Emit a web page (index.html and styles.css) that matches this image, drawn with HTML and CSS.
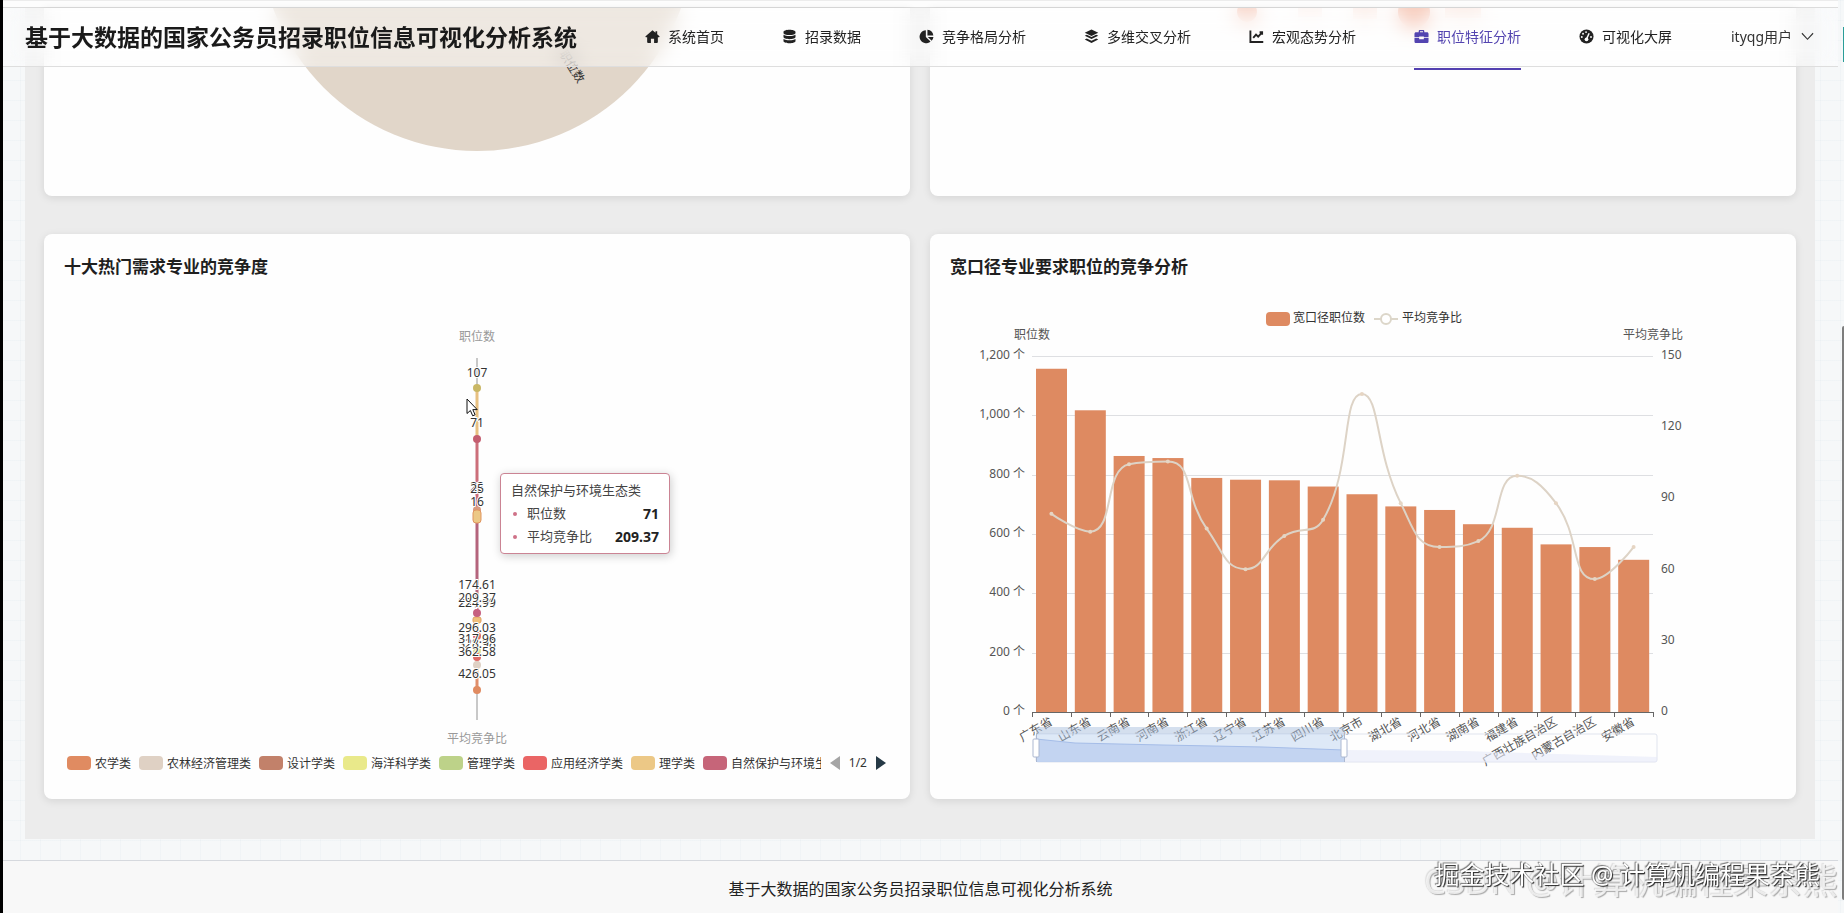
FILE: index.html
```html
<!DOCTYPE html>
<html lang="zh-CN">
<head>
<meta charset="utf-8">
<title>基于大数据的国家公务员招录职位信息可视化分析系统</title>
<link rel="stylesheet" href="styles.css">
</head>
<body>
<div class="topstrip"></div>
<header class="header">
  <h1 class="brand">基于大数据的国家公务员招录职位信息可视化分析系统</h1>
  <nav class="nav">
    <a class="nav-item" href="#home"><svg class="icon" viewBox="0 0 16 16"><path d="M8 1.2 .6 7.8c-.3.3-.1.9.4.9h1.3v5.2c0 .6.4 1 1 1h3V10.500h3.400v4.400h3c.6 0 1-.4 1-1V8.700H15c.5 0 .7-.6.4-.9L13 5.600V2.400h-1.800V4z"/></svg>系统首页</a>
    <a class="nav-item" href="#data"><svg class="icon" viewBox="0 0 16 16"><path d="M8 .8C4.400.800 1.600 1.800 1.600 3.200v1C1.600 5.500 4.400 6.400 8 6.400s6.400-.9 6.400-2.200v-1C14.400 1.800 11.600.8 8 .8zM1.600 6.200v2.400c0 1.300 2.800 2.200 6.400 2.200s6.400-.9 6.400-2.200V6.200C13 7.200 10.600 7.500 8 7.500s-5-.3-6.400-1.300zM1.600 10.600v2.200C1.600 14.200 4.400 15.200 8 15.200s6.400-1 6.400-2.400v-2.200c-1.400 1-3.800 1.300-6.400 1.300s-5-.3-6.400-1.300z"/></svg>招录数据</a>
    <a class="nav-item" href="#competition"><svg class="icon" viewBox="0 0 16 16"><path d="M7.300 1.200v7.200l5 5A7 7 0 1 1 7.300 1.200zM9 .7A7 7 0 0 1 15.300 7H9zM9.400 8.500h6a7 7 0 0 1-1.900 4.100z"/></svg>竞争格局分析</a>
    <a class="nav-item" href="#cross"><svg class="icon" viewBox="0 0 16 16"><path d="M8 .6.800 4 8 7.500 15.200 4z"/><path d="M.8 7.200 3 6.200l5 2.400 5-2.400 2.200 1L8 10.700zM.8 11.200l2.200-1 5 2.400 5-2.400 2.200 1L8 14.900z"/></svg>多维交叉分析</a>
    <a class="nav-item" href="#macro"><svg class="icon icon-line" viewBox="0 0 16 16"><path d="M1.500 1.500v12.300h13.700M4.500 9.500l3-3.500 2.300 2.200 4.200-4.500M11.300 3.500H14v2.700"/></svg>宏观态势分析</a>
    <a class="nav-item active" href="#feature" aria-current="page"><svg class="icon" viewBox="0 0 16 16"><path d="M5 3.500V2.300C5 1.500 5.500 1 6.300 1h3.400c.8 0 1.300.5 1.300 1.300v1.200h2.800c1 0 1.700.7 1.700 1.700v3.500h-5V8h-5v.7h-5V5.200c0-1 .7-1.700 1.700-1.700zm1.400 0h3.200v-1H6.400zM.5 9.700h5v1.100h5V9.700h5v3.500c0 1-.7 1.700-1.700 1.700H2.200c-1 0-1.700-.7-1.700-1.700z"/></svg>职位特征分析</a>
    <a class="nav-item" href="#screen"><svg class="icon" viewBox="0 0 16 16"><circle cx="8" cy="8" r="7.500"/><path class="gauge" d="M8 10.800 10.800 4.500"/><circle class="dot" cx="8" cy="11" r="2"/><circle class="dot" cx="7.500" cy="3.300" r="1"/><circle class="dot" cx="4.300" cy="5" r="1"/><circle class="dot" cx="3" cy="8.500" r="1"/><circle class="dot" cx="12.800" cy="8.500" r="1"/></svg>可视化大屏</a>
  </nav>
  <button class="user" type="button">ityqg用户<svg class="chevron" viewBox="0 0 14 9"><path d="M1 1l6 6.500L13 1"/></svg></button>
</header>

<main class="main">
  <div class="panel">
    <section class="card card-cut">
      <svg class="chart-cut" viewBox="0 0 800 188" aria-hidden="true">
        <circle cx="400" cy="-74" r="217" fill="#e1d6c9"/>
        <text class="pie-label" transform="translate(501 76) rotate(58)" text-anchor="end">职位数</text>
      </svg>
    </section>
    <section class="card card-cut">
      <svg class="chart-cut" viewBox="0 0 800 188" aria-hidden="true">
        <g fill="#ec8f6c">
          <circle cx="284" cy="4" r="10" opacity=".7"/>
          <rect x="335" y="0" width="24" height="9" opacity=".15"/>
          <rect x="390" y="0" width="24" height="11" opacity=".25"/>
          <circle cx="451" cy="4" r="16" opacity=".8"/>
          <rect x="482" y="0" width="36" height="10" opacity=".25"/>
        </g>
      </svg>
    </section>

    <section class="card">
      <h2 class="card-title">十大热门需求专业的竞争度</h2>
      <div class="parallel">
        <svg id="parallel-chart" class="parallel-chart" viewBox="0 0 800 458"></svg>
        <div class="tooltip">
          <div>自然保护与环境生态类</div>
          <div class="tip-row"><i class="tip-dot"></i><span>职位数</span><b>71</b></div>
          <div class="tip-row"><i class="tip-dot"></i><span>平均竞争比</span><b>209.37</b></div>
        </div>
        <svg class="cursor" viewBox="0 0 12 19"><path d="M1 1v14.500l3.400-3 2.300 5.300 2.400-1-2.300-5.200h4.400z"/></svg>
      </div>
      <div class="legend">
        <div class="legend-items">
          <button class="legend-item" type="button"><i class="swatch c1"></i>农学类</button>
          <button class="legend-item" type="button"><i class="swatch c2"></i>农林经济管理类</button>
          <button class="legend-item" type="button"><i class="swatch c3"></i>设计学类</button>
          <button class="legend-item" type="button"><i class="swatch c4"></i>海洋科学类</button>
          <button class="legend-item" type="button"><i class="swatch c5"></i>管理学类</button>
          <button class="legend-item" type="button"><i class="swatch c6"></i>应用经济学类</button>
          <button class="legend-item" type="button"><i class="swatch c7"></i>理学类</button>
          <button class="legend-item" type="button"><i class="swatch c8"></i>自然保护与环境生态类</button>
        </div>
        <div class="pager">
          <button class="page-btn" type="button" aria-label="上一页" disabled><svg viewBox="0 0 10 14"><path d="M10 0v14L0 7z" fill="#a5a5a5"/></svg></button>
          <span>1/2</span>
          <button class="page-btn" type="button" aria-label="下一页"><svg viewBox="0 0 10 14"><path d="M0 0v14l10-7z" fill="#263a46"/></svg></button>
        </div>
      </div>
    </section>

    <section class="card">
      <h2 class="card-title">宽口径专业要求职位的竞争分析</h2>
      <svg id="combo-chart" class="combo-chart" viewBox="0 0 800 489"></svg>
    </section>
  </div>
</main>

<footer class="footer">基于大数据的国家公务员招录职位信息可视化分析系统</footer>

<div class="mark mark-back">CSDN @计算机编程果茶熊</div>
<div class="mark mark-front">掘金技术社区 @ 计算机编程果茶熊</div>
<div class="edge-tab"></div>
<div class="scroll-thumb"></div>
<script src="charts.js"></script>
</body>
</html>
```
FILE: styles.css
```css
* { box-sizing: border-box; }

body {
  margin: 0;
  min-height: 100vh;
  display: flex;
  flex-direction: column;
  border-left: 3px solid #000;
  padding-right: 6px;
  overflow: hidden;
  font-family: "Noto Sans", "Noto Sans CJK SC", sans-serif;
  color: #222;
  background-color: #f6f8f9;
  background-image:
    linear-gradient(90deg, rgba(120, 160, 190, .04) 1px, transparent 1px),
    linear-gradient(rgba(120, 160, 190, .04) 1px, transparent 1px);
  background-size: 20px 20px;
}

button {
  border: 0;
  padding: 0;
  background: none;
  font: inherit;
  color: inherit;
}

.topstrip {
  height: 8px;
  background: #fdfdfd;
  border-top: 1px solid #ececec;
  border-bottom: 1px solid #dcdcdc;
}

.header {
  position: fixed;
  z-index: 10;
  top: 8px;
  left: 3px;
  right: 6px;
  height: 59px;
  display: flex;
  align-items: center;
  padding: 0 24px 2px 22px;
  background: rgba(255, 255, 255, .45);
  border-bottom: 1px solid #dedede;
}

.header::before {
  content: "";
  position: absolute;
  z-index: -1;
  inset: 0;
  backdrop-filter: blur(10px);
}

.brand {
  margin: 0;
  font-size: 23px;
  font-weight: 700;
  line-height: 32px;
  color: #1a1a1a;
  white-space: nowrap;
  font-family: KaiTi, STKaiti, "Noto Sans CJK SC", sans-serif;
}

.nav {
  display: flex;
  gap: 58px;
  margin-left: 68px;
  height: 58px;
}

.nav-item {
  position: relative;
  display: flex;
  align-items: center;
  gap: 8px;
  font-size: 14px;
  color: #222;
  text-decoration: none;
  white-space: nowrap;
}

.nav-item.active { color: #5344b0; }

.nav-item.active::after {
  content: "";
  position: absolute;
  left: 0;
  right: 0;
  bottom: -5px;
  height: 2px;
  background: #5340b0;
}

.icon { width: 15px; height: 15px; fill: currentColor; }
.icon-line { fill: none; stroke: currentColor; stroke-width: 2; }
.icon .dot { fill: #fff; }
.icon .gauge { stroke: #fff; stroke-width: 1.500; }

.user {
  display: flex;
  align-items: center;
  gap: 9px;
  margin-left: auto;
  font-size: 14px;
  color: #333;
  white-space: nowrap;
}

.chevron { width: 13px; height: 9px; fill: none; stroke: #333; stroke-width: 1.200; }

.main { padding: 0 23px 0 22px; }

.panel {
  display: grid;
  grid-template-columns: 1fr 1fr;
  gap: 38px 20px;
  padding: 0 19px 40px;
  background: #ececec;
}

.card {
  min-width: 0;
  padding: 20px;
  background: #fefefe;
  border-radius: 8px;
  box-shadow: 0 2px 8px rgba(0, 0, 0, .1);
}

.card-cut { padding: 0; border-radius: 0 0 8px 8px; }
.chart-cut { display: block; width: 100%; height: 188px; }

.pie-label { font-size: 12px; fill: #333; }

.card-title {
  margin: 0 0 10px;
  font-size: 17px;
  line-height: 26px;
  font-weight: 700;
  color: #1f1f1f;
}

.parallel { position: relative; }
.parallel-chart { display: block; width: 100%; height: 458px; }
.combo-chart { display: block; width: 100%; height: 489px; }

.parallel-chart text, .combo-chart text { font-size: 12px; fill: #555; }
.parallel-chart .axis-name { fill: #999; }
.parallel-chart .value { fill: #333; stroke: #fff; stroke-width: 2; paint-order: stroke; }
.combo-chart .legend-text { fill: #333; }

.tooltip {
  position: absolute;
  top: 183px;
  left: calc(50% + 23px);
  width: 170px;
  padding: 5px 10px;
  border: 1px solid #cb8494;
  border-radius: 4px;
  background: #fff;
  box-shadow: 1px 2px 10px rgba(0, 0, 0, .2);
  font-size: 13px;
  line-height: 23px;
  color: #444;
}

.tip-row { display: flex; align-items: center; }
.tip-row b { margin-left: auto; font-size: 14px; color: #222; }
.tip-dot { width: 4px; height: 4px; margin: 0 10px 0 2px; border-radius: 50%; background: #cf7288; }

.cursor {
  position: absolute;
  top: 108px;
  left: calc(50% - 11px);
  width: 12px;
  height: 19px;
  fill: #fff;
  stroke: #111;
}

.legend {
  display: flex;
  align-items: center;
  justify-content: space-between;
  height: 29px;
  padding: 0 4px 0 3px;
  font-size: 12px;
  color: #333;
}

.legend-items { flex: 1; display: flex; gap: 8px; overflow: hidden; }
.legend-item { display: flex; align-items: center; gap: 4px; white-space: nowrap; }
.swatch { width: 24px; height: 14px; border-radius: 4px; }
.c1 { background: #e08b61; }
.c2 { background: #dfd1c4; }
.c3 { background: #c2816a; }
.c4 { background: #e9e98a; }
.c5 { background: #bdd289; }
.c6 { background: #ea6565; }
.c7 { background: #ecc886; }
.c8 { background: #c66579; }

.pager { display: flex; align-items: center; gap: 9px; margin-left: 9px; }
.page-btn { display: flex; }
.page-btn svg { width: 10px; height: 14px; }

.footer {
  flex: 1;
  margin-top: 21px;
  padding: 15px 0 13px;
  border-top: 1px solid #d6d9de;
  background: #f8f8f8;
  text-align: center;
  font-size: 16px;
  line-height: 24px;
  color: #222;
  font-family: STSong, SimSun, "Noto Sans CJK SC", sans-serif;
}

.mark { position: fixed; white-space: nowrap; }

.mark-front {
  right: 24px;
  bottom: 21px;
  font-size: 25px;
  line-height: 36px;
  color: #fff;
  text-shadow: 1px 1px 1px #222, -1px -1px 1px #777;
}

.mark-back {
  right: 6px;
  bottom: 8px;
  font-size: 35px;
  line-height: 48px;
  color: rgba(250, 250, 250, .8);
  text-shadow: 1px 1px 1px #aaa, -1px -1px 1px #ddd;
}

.edge-tab {
  position: fixed;
  right: 0;
  top: 27px;
  width: 1px;
  height: 35px;
  background: #2a9d98;
}

.scroll-thumb {
  position: fixed;
  right: 0;
  top: 326px;
  width: 2px;
  height: 574px;
  border-radius: 2px 0 0 2px;
  background: #7d7d7d;
}
```
FILE: charts.js
```js
const NS = "http://www.w3.org/2000/svg";

function add(parent, tag, attrs, text) {
  const el = document.createElementNS(NS, tag);
  for (const key in attrs) el.setAttribute(key, attrs[key]);
  if (text !== undefined) el.textContent = text;
  parent.appendChild(el);
  return el;
}

function smoothPath(points, smooth) {
  const clamp = (v, a, b) => Math.max(Math.min(v, Math.max(a, b)), Math.min(a, b));
  let d = `M${points[0]}`;
  let out = points[0];
  for (let i = 1; i < points.length; i++) {
    const p = points[i], prev = points[i - 1], next = points[i + 1];
    if (!next) {
      d += `C${out} ${p} ${p}`;
      break;
    }
    const lenPrev = Math.hypot(p[0] - prev[0], p[1] - prev[1]);
    const lenNext = Math.hypot(next[0] - p[0], next[1] - p[1]);
    const ratio = lenNext / (lenNext + lenPrev);
    const cpIn = [], cpOut = [];
    for (let k = 0; k < 2; k++) {
      const v = next[k] - prev[k];
      let o = clamp(p[k] + v * smooth * ratio, next[k], p[k]);
      let n = clamp(p[k] - (o - p[k]) * lenPrev / lenNext, prev[k], p[k]);
      o = p[k] + (p[k] - n) * lenNext / lenPrev;
      cpIn.push(n);
      cpOut.push(o);
    }
    d += `C${out} ${cpIn} ${p}`;
    out = cpOut;
  }
  return d;
}

function drawCombo() {
  const svg = document.getElementById("combo-chart");
  const left = 69, right = 690, top = 66, bottom = 422;
  const names = ["广东省", "山东省", "云南省", "河南省", "浙江省", "辽宁省", "江苏省", "四川省",
    "北京市", "湖北省", "河北省", "湖南省", "福建省", "广西壮族自治区", "内蒙古自治区", "安徽省"];
  const jobs = [1157, 1017, 863, 856, 789, 783, 781, 760, 734, 693, 681, 633, 621, 565, 556, 513];
  const ratios = [83.5, 76, 104.4, 105.5, 77.3, 60.2, 74.2, 81, 134, 88, 69.500, 72, 99.500, 88, 56, 69.500];
  const band = (right - left) / names.length;
  const yJobs = v => bottom - v / 1200 * (bottom - top);
  const yRatio = v => bottom - v / 150 * (bottom - top);

  add(svg, "rect", { x: 303, y: 22, width: 24, height: 14, rx: 4, fill: "#de8a61" });
  add(svg, "text", { x: 330, y: 32, class: "legend-text" }, "宽口径职位数");
  add(svg, "path", { d: "M411 29H435", stroke: "#dcd6c9", "stroke-width": 2 });
  add(svg, "circle", { cx: 423, cy: 29, r: 5, fill: "#fff", stroke: "#dcd6c9", "stroke-width": 2 });
  add(svg, "text", { x: 439, y: 32, class: "legend-text" }, "平均竞争比");
  add(svg, "text", { x: left, y: 49, "text-anchor": "middle" }, "职位数");
  add(svg, "text", { x: right, y: 49, "text-anchor": "middle" }, "平均竞争比");

  for (let v = 0; v <= 1200; v += 200) {
    const y = Math.round(yJobs(v)) + 0.5;
    if (v) add(svg, "path", { d: `M${left} ${y}H${right}`, stroke: "#dedfe2" });
    add(svg, "text", { x: 62, y: y + 2, "text-anchor": "end" }, v.toLocaleString("en-US") + " 个");
  }
  for (let v = 0; v <= 150; v += 30) {
    add(svg, "text", { x: right + 8, y: Math.round(yRatio(v)) + 3 }, v);
  }

  jobs.forEach((v, i) => {
    add(svg, "rect", { x: left + band * i + 4, y: yJobs(v), width: 31, height: bottom - yJobs(v), fill: "#de8a61" });
  });

  let axis = `M${left} 422.500H${right}`;
  for (let i = 0; i <= names.length; i++) axis += `M${Math.round(left + band * i) + 0.5} 422v5`;
  add(svg, "path", { d: axis, stroke: "#666", fill: "none" });

  const points = ratios.map((v, i) => [left + band * (i + 0.5), yRatio(v)]);
  add(svg, "path", { d: smoothPath(points, 0.5), fill: "none", stroke: "#ddd3c6", "stroke-width": 2 });
  points.forEach(p => add(svg, "circle", { cx: p[0], cy: p[1], r: 2, fill: "#e6d5c3" }));

  names.forEach((name, i) => {
    const x = left + band * (i + 0.5);
    add(svg, "text", { transform: `translate(${x + 2} 434) rotate(-30)`, "text-anchor": "end" }, name);
  });

  add(svg, "rect", { x: 73, y: 444, width: 621, height: 28, rx: 2, fill: "none", stroke: "#e0e4ee" });
  add(svg, "path", { d: "M381 460L500 461L694 467V472H381Z", fill: "#e6eaf8", opacity: 0.6 });
  add(svg, "rect", { x: 73, y: 437, width: 308, height: 7, fill: "#a9c0de", opacity: 0.5 });
  add(svg, "rect", { x: 73, y: 444, width: 308, height: 28, fill: "#b8d0f0", opacity: 0.45 });
  add(svg, "path", { d: "M73 449L112 453L200 455L300 457L381 460V472H73Z", fill: "#b4c9ee", opacity: 0.65 });
  add(svg, "path", { d: "M73 449L112 453L200 455L300 457L381 460", fill: "none", stroke: "#a5bde8" });
  [73, 381].forEach(x => {
    add(svg, "path", { d: `M${x}.500 444V472`, stroke: "#acb8d1" });
    add(svg, "rect", { x: x - 3, y: 449, width: 6, height: 18, rx: 1, fill: "#fff", stroke: "#acb8d1" });
  });
}

function drawParallel() {
  const svg = document.getElementById("parallel-chart");
  const x = 400;
  add(svg, "text", { x, y: 51, "text-anchor": "middle", class: "axis-name" }, "职位数");
  add(svg, "text", { x, y: 453, "text-anchor": "middle", class: "axis-name" }, "平均竞争比");
  add(svg, "path", { d: `M${x} 68V430`, stroke: "#c8c8c8", "stroke-width": 2 });
  [[98, 148, "#e8c080"], [148, 218, "#cc6f7a"], [218, 323, "#b4647c"], [323, 365, "#ecb98a"],
    [365, 376, "#e2a0a0"], [376, 400, "#e08f6c"]].forEach(s => {
    add(svg, "path", { d: `M${x} ${s[0]}V${s[1]}`, stroke: s[2], "stroke-width": 3 });
  });
  [[98, "#c9b765"], [149, "#c45e70"], [220, "#d99a80"], [346, "#e06b66"],
    [361, "#dce29a"], [367, "#e06b66"], [375, "#dfd1c4"], [400, "#e08b61"]].forEach(p => {
    add(svg, "circle", { cx: x, cy: p[0], r: 4, fill: p[1] });
  });
  add(svg, "rect", { x: x - 4, y: 220, width: 8, height: 13, rx: 3, fill: "#ecc886", stroke: "#e0955f" });
  add(svg, "rect", { x: x - 4, y: 327, width: 8, height: 6, rx: 2, fill: "#f0c07c", stroke: "#e0a060" });
  add(svg, "circle", { cx: x, cy: 323, r: 4, fill: "#c66080" });
  [["107", 87], ["71", 137], ["22", 201], ["16", 216], ["25", 203],
    ["231.79", 318], ["224.99", 317], ["209.37", 312], ["174.61", 299],
    ["328.98", 358], ["317.96", 353], ["296.03", 342], ["362.58", 366], ["426.05", 388]].forEach(v => {
    add(svg, "text", { x, y: v[1], "text-anchor": "middle", class: "value" }, v[0]);
  });
}

drawCombo();
drawParallel();
```
